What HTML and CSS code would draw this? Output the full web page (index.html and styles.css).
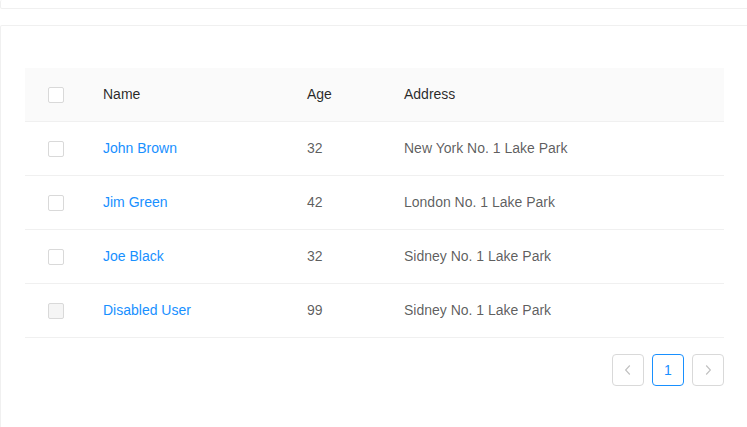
FILE: index.html
```html
<!DOCTYPE html>
<html>
<head>
<meta charset="utf-8">
<link rel="stylesheet" href="styles.css">
</head>
<body>
<div class="card card-top"></div>
<div class="card card-main">
  <table class="table">
    <thead>
      <tr>
        <th class="sel"><span class="cb"></span></th>
        <th class="c-name">Name</th>
        <th class="c-age">Age</th>
        <th>Address</th>
      </tr>
    </thead>
    <tbody>
      <tr><td class="sel"><span class="cb"></span></td><td><a>John Brown</a></td><td>32</td><td>New York No. 1 Lake Park</td></tr>
      <tr><td class="sel"><span class="cb"></span></td><td><a>Jim Green</a></td><td>42</td><td>London No. 1 Lake Park</td></tr>
      <tr><td class="sel"><span class="cb"></span></td><td><a>Joe Black</a></td><td>32</td><td>Sidney No. 1 Lake Park</td></tr>
      <tr><td class="sel"><span class="cb cb-disabled"></span></td><td><a>Disabled User</a></td><td>99</td><td>Sidney No. 1 Lake Park</td></tr>
    </tbody>
  </table>
  <div class="pagination">
    <span class="pg pg-disabled"><svg width="12" height="12" viewBox="0 0 12 12"><path d="M7.8 1.5 L3.6 6 L7.8 10.5" fill="none" stroke="currentColor" stroke-width="1.1"/></svg></span>
    <span class="pg pg-active">1</span>
    <span class="pg pg-disabled"><svg width="12" height="12" viewBox="0 0 12 12"><path d="M4.2 1.5 L8.4 6 L4.2 10.5" fill="none" stroke="currentColor" stroke-width="1.1"/></svg></span>
  </div>
</div>
</body>
</html>
```

FILE: styles.css
```css
html, body {
  margin: 0;
  padding: 0;
  background: #fff;
  font-family: "Liberation Sans", Arial, sans-serif;
  font-size: 14px;
  color: rgba(0,0,0,0.85);
  overflow: hidden;
}
.card {
  border: 1px solid #f0f0f0;
  border-radius: 2px;
  margin-right: -10px;
}
.card-top {
  height: 8px;
  border-top: none;
  margin-top: 0;
}
.card-main {
  margin-top: 16px;
  padding: 42px 32px 60px 24px;
  border-bottom: none;
}
.table {
  width: 699px;
  border-collapse: collapse;
  table-layout: fixed;
}
.table th, .table td {
  padding: 0 16px 2px;
  height: 51px;
  border-bottom: 1px solid #f0f0f0;
  text-align: left;
  line-height: 22px;
}
.table th {
  background: #fafafa;
  font-weight: 500;
  color: rgba(0,0,0,0.85);
}
.table td {
  color: rgba(0,0,0,0.65);
}
.table th.sel, .table td.sel {
  width: 30px;
  text-align: center;
  padding: 0 16px 2px;
}
.table th.c-name { width: 172px; }
.table th.c-age { width: 65px; }
.table a {
  color: #1890ff;
  text-decoration: none;
}
.cb {
  display: inline-block;
  width: 14px;
  height: 14px;
  border: 1px solid #d9d9d9;
  border-radius: 2px;
  background: #fff;
  vertical-align: middle;
  position: relative;
  top: 0;
}
.cb-disabled {
  background: #f5f5f5;
}
.pagination {
  display: flex;
  justify-content: flex-end;
  gap: 8px;
  margin-top: 16px;
  width: 699px;
}
.pg {
  box-sizing: border-box;
  width: 32px;
  height: 32px;
  border: 1px solid #d9d9d9;
  border-radius: 4px;
  display: flex;
  align-items: center;
  justify-content: center;
  font-size: 14px;
  color: rgba(0,0,0,0.85);
}
.pg-disabled {
  color: rgba(0,0,0,0.25);
}
.pg-active {
  border-color: #1890ff;
  color: #1890ff;
}
```
